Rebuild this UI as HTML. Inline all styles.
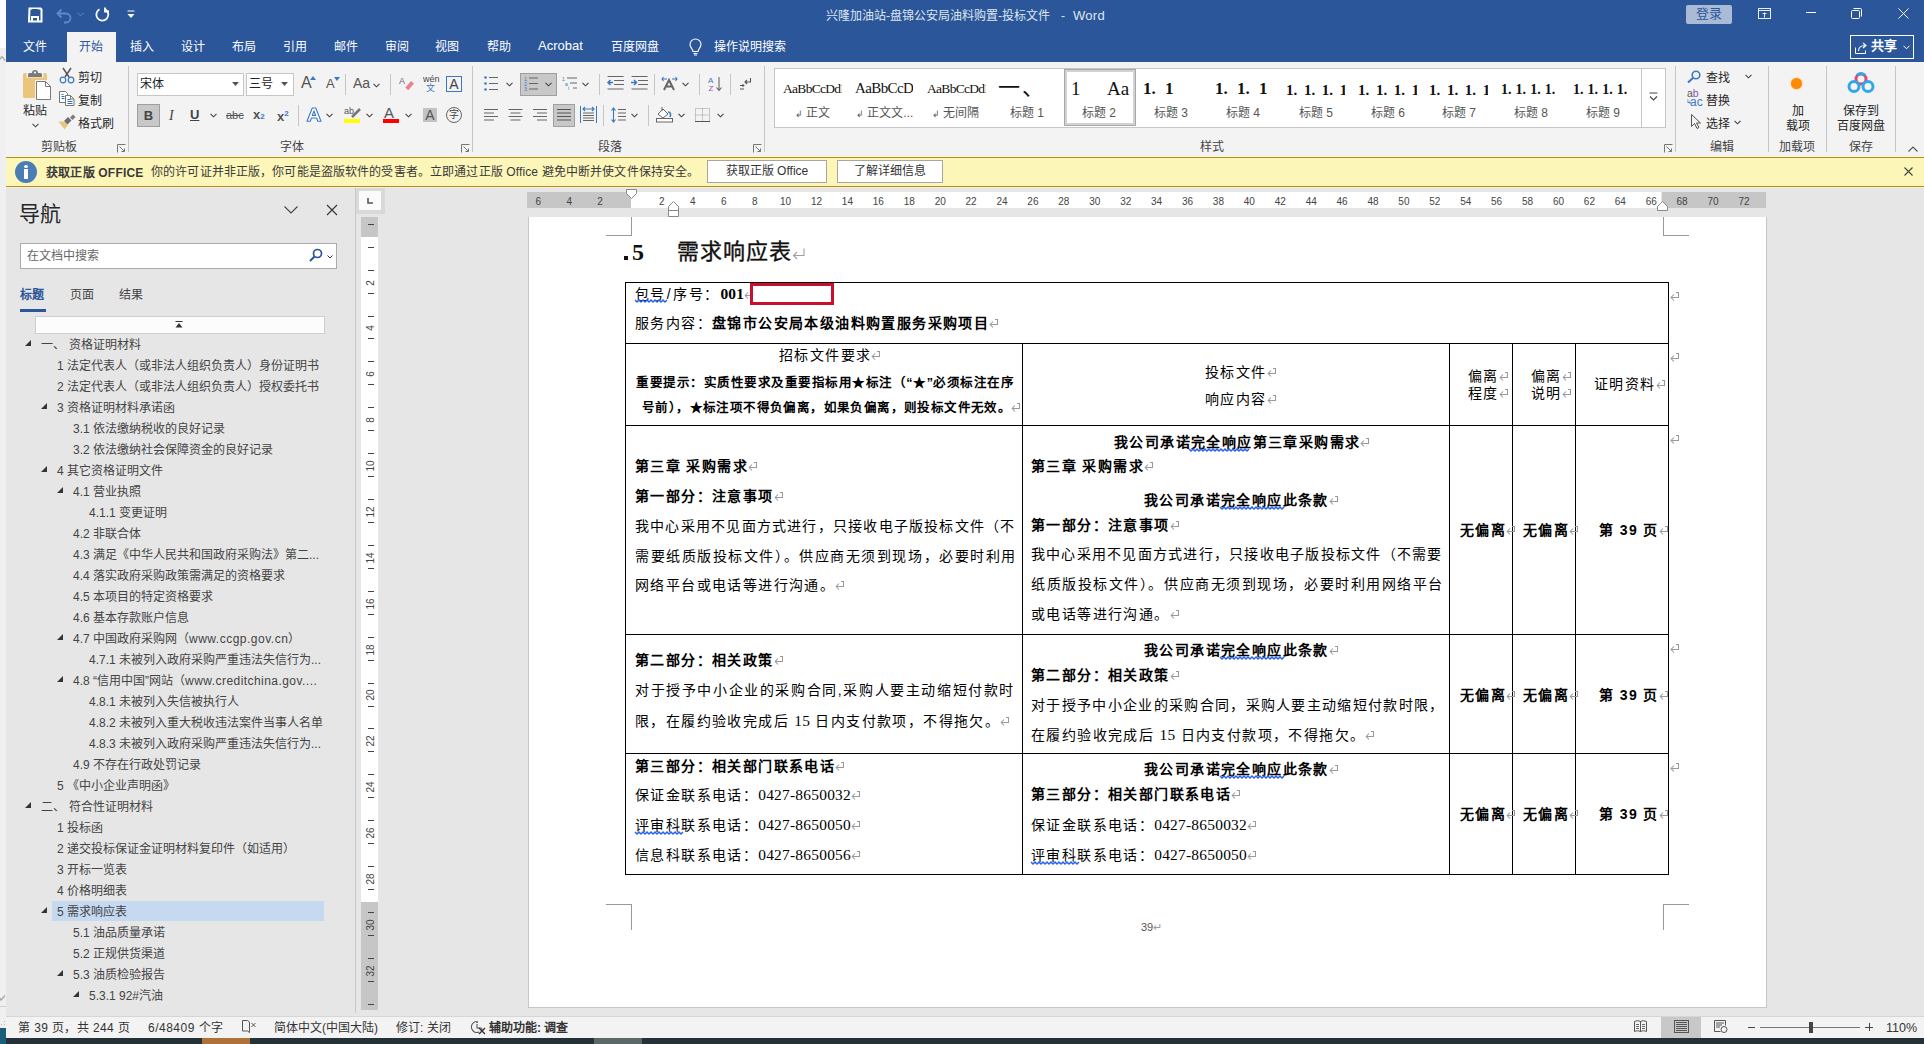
<!DOCTYPE html>
<html lang="zh-CN"><head><meta charset="utf-8">
<style>
*{box-sizing:border-box;margin:0;padding:0}
html,body{width:1924px;height:1044px;overflow:hidden;background:linear-gradient(#fff 0,#fff 48px,#f0f0f0 48px);font-family:"Liberation Sans",sans-serif;}
.a{position:absolute;white-space:nowrap}
#title{left:6px;top:0;width:1918px;height:62px;background:#2b579a}
#ribbon{left:6px;top:62px;width:1918px;height:126px;background:#f3f3f3}
#msg{left:6px;top:157px;width:1918px;height:30px;background:#fdf6b6;border-top:1px solid #b8900a;border-bottom:1px solid #b8900a;background:#fcf6b9}
#nav{left:6px;top:188px;width:350px;height:828px;background:#e6e6e6}
#docbg{left:356px;top:188px;width:1568px;height:828px;background:#e6e6e6}
#status{left:6px;top:1016px;width:1918px;height:22px;background:#f3f3f3;border-top:1px solid #d6d6d6}
#task{left:0;top:1038px;width:1924px;height:6px;background:#243238}
.tab{top:32px;height:30px;line-height:30px;font-size:12px;color:#fff}
.t12{font-size:12px;line-height:16px}
svg{position:absolute;overflow:visible}
</style></head><body>
<div class="a" id="title"></div>
<div class="a" id="ribbon"></div>
<div class="a" id="msg"></div>
<div class="a" id="nav"></div>
<div class="a" id="docbg"></div>
<div class="a" id="status"></div>
<div class="a" id="task"></div>

<!-- ===== TITLE BAR ===== -->
<!-- QAT -->
<svg style="left:28px;top:7px" width="15" height="16" viewBox="0 0 15 16"><path d="M1.5 1.5h11l1 1v12h-12.5z" fill="none" stroke="#fff" stroke-width="2"/><rect x="4" y="2" width="6" height="4" fill="#2b579a"/><path d="M4 15v-5h6v5" fill="none" stroke="#fff" stroke-width="2"/></svg>
<svg style="left:56px;top:8px" width="16" height="14" viewBox="0 0 16 14"><path d="M2 5.5h8a4.5 4.5 0 0 1 0 9H8" fill="none" stroke="#5e8cc4" stroke-width="1.8"/><path d="M5.5 1.5L1.5 5.5L5.5 9.5" fill="none" stroke="#5e8cc4" stroke-width="1.8"/></svg>
<svg style="left:77px;top:12px" width="7" height="5" viewBox="0 0 7 5"><path d="M0.5 0.8L3.5 3.8L6.5 0.8" fill="none" stroke="#5e8cc4" stroke-width="1"/></svg>
<svg style="left:95px;top:7px" width="15" height="15" viewBox="0 0 15 15"><path d="M10.5 2.5A6 6 0 1 1 4.5 2.3" fill="none" stroke="#fff" stroke-width="1.8"/><path d="M10 0.5v4h4" fill="none" stroke="#fff" stroke-width="1.8"/></svg>
<svg style="left:127px;top:10px" width="8" height="10" viewBox="0 0 8 10"><path d="M0.5 1h7" stroke="#fff" stroke-width="1"/><path d="M0.5 4h7L4 8z" fill="#fff"/></svg>
<div class="a t12" style="left:826px;top:8px;color:#dfe6f0">兴隆加油站-盘锦公安局油料购置-投标文件</div><div class="a t12" style="left:1061px;top:8px;color:#dfe6f0">-</div><div class="a t12" style="left:1073px;top:8px;color:#dfe6f0;font-size:13px;letter-spacing:0.3px">Word</div>
<div class="a" style="left:1686px;top:5px;width:46px;height:19px;background:#aabbd6;border-radius:2px;color:#2b579a;font-size:13px;line-height:18px;text-align:center">登录</div>
<svg style="left:1758px;top:8px" width="14" height="11" viewBox="0 0 14 11"><rect x="0.5" y="0.5" width="12" height="10" fill="none" stroke="#e8eef6" stroke-width="1"/><path d="M0.5 2.5h12" stroke="#e8eef6"/><path d="M6.5 9.5V4.5M4.5 5.5h4" fill="none" stroke="#e8eef6"/></svg>
<div class="a" style="left:1806px;top:12px;width:10px;height:1px;background:#fff"></div>
<svg style="left:1851px;top:8px" width="11" height="11" viewBox="0 0 11 11"><rect x="0.5" y="2.5" width="8" height="8" rx="1" fill="none" stroke="#fff"/><path d="M2.5 0.5h7a1 1 0 0 1 1 1v7" fill="none" stroke="#fff"/></svg>
<svg style="left:1898px;top:8px" width="11" height="11" viewBox="0 0 11 11"><path d="M0.5 0.5l10 10M10.5 0.5l-10 10" stroke="#fff" stroke-width="1"/></svg>

<!-- TABS -->
<div class="a" style="left:67px;top:32px;width:49px;height:30px;background:#f3f3f3"></div>
<div class="a tab" style="left:23px">文件</div>
<div class="a tab" style="left:79px;color:#2b579a">开始</div>
<div class="a tab" style="left:130px">插入</div>
<div class="a tab" style="left:181px">设计</div>
<div class="a tab" style="left:232px">布局</div>
<div class="a tab" style="left:283px">引用</div>
<div class="a tab" style="left:334px">邮件</div>
<div class="a tab" style="left:385px">审阅</div>
<div class="a tab" style="left:435px">视图</div>
<div class="a tab" style="left:487px">帮助</div>
<div class="a tab" style="left:538px;top:31px;font-size:13px">Acrobat</div>
<div class="a tab" style="left:611px">百度网盘</div>
<svg style="left:689px;top:39px" width="13" height="17" viewBox="0 0 13 17"><path d="M4 12.5C4 10 1 8.5 1 5.5a5.5 5.5 0 0 1 11 0c0 3-3 4.5-3 7z" fill="none" stroke="#fff" stroke-width="1.1"/><path d="M4.5 14.5h4M5 16h3" stroke="#fff" stroke-width="1"/></svg>
<div class="a tab" style="left:714px">操作说明搜索</div>
<div class="a" style="left:1850px;top:35px;width:64px;height:24px;border:1px solid #fff"></div>
<svg style="left:1855px;top:41px" width="14" height="13" viewBox="0 0 14 13"><path d="M0.5 6.5v6h10v-3" fill="none" stroke="#fff" stroke-width="1"/><path d="M3.5 10c0-3.5 2.5-5.5 6.5-5.5M8 2l3 2.5L8 7" fill="none" stroke="#fff" stroke-width="1.1"/></svg>
<div class="a" style="left:1871px;top:36px;font-size:13px;line-height:20px;color:#fff;font-weight:bold">共享</div>
<svg style="left:1903px;top:45px" width="7" height="5" viewBox="0 0 7 5"><path d="M0.5 0.8L3.5 3.8L6.5 0.8" fill="none" stroke="#fff" stroke-width="1"/></svg>

<!-- ===== RIBBON ===== -->
<style>
.rl{font-size:12px;line-height:14px;color:#262626}
.gl{font-size:12px;line-height:14px;color:#444;top:140px}
.sep{width:1px;background:#c6c6c6}
.gsep{top:66px;height:86px;width:1px;background:#c6c6c6}
.chev{width:7px;height:5px}
</style>
<!-- clipboard -->
<svg style="left:22px;top:68px" width="30" height="33" viewBox="0 0 30 33"><rect x="1" y="5" width="24" height="25" rx="1.5" fill="#ebc57c"/><rect x="4.5" y="2.5" width="17" height="7" fill="#f3f3f3"/><path d="M6 9V6.5a1.5 1.5 0 0 1 1.5-1.5H10a3 3 0 0 1 6 0h2.5A1.5 1.5 0 0 1 20 6.5V9z" fill="#7a7a7a"/><circle cx="13" cy="4.6" r="1.1" fill="#f3f3f3"/><rect x="13" y="12" width="17" height="21" fill="#f3f3f3"/><path d="M14.5 13.5h9l5 5v13h-14z" fill="#fff" stroke="#7a7a7a" stroke-width="1"/><path d="M23.5 13.5v5h5" fill="none" stroke="#7a7a7a"/></svg>
<div class="a rl" style="left:23px;top:104px">粘贴</div>
<svg class="chev" style="left:32px;top:123px" viewBox="0 0 7 5" width="7" height="5"><path d="M0.5 0.8L3.5 3.8L6.5 0.8" fill="none" stroke="#444" stroke-width="1.1"/></svg>
<svg style="left:59px;top:67px" width="16" height="17" viewBox="0 0 16 17"><path d="M4 1l6 9M12 1l-6 9" stroke="#555" stroke-width="1.5"/><circle cx="4" cy="13" r="2.8" fill="none" stroke="#3b78c4" stroke-width="1.2"/><circle cx="12" cy="13" r="2.8" fill="none" stroke="#3b78c4" stroke-width="1.2"/></svg>
<div class="a rl" style="left:78px;top:71px">剪切</div>
<svg style="left:59px;top:91px" width="16" height="15" viewBox="0 0 16 15"><path d="M0.5 0.5h6l2 2v9h-8z" fill="#fff" stroke="#777"/><path d="M6.5 4.5h5l3.5 3.5v6.5h-8.5z" fill="#fff" stroke="#777"/><path d="M11.5 4.5v3.5h3.5" fill="none" stroke="#777"/><path d="M2.5 3.5h2M2.5 5.5h3M2.5 7.5h3M8.5 8.5h3M8.5 10.5h5M8.5 12.5h5" stroke="#2f6fc4" stroke-width="1"/></svg>
<div class="a rl" style="left:78px;top:94px">复制</div>
<svg style="left:58px;top:114px" width="18" height="16" viewBox="0 0 18 16"><path d="M0.5 7.5h5.5l4 3.5-3.5 4.5z" fill="#ebc57c"/><path d="M6 7l4-4 3.5 3.5-4 4z" fill="#6e6e6e"/><path d="M12 3.5l3-3 2.5 2.5-3 3z" fill="#7a7a7a"/></svg>
<div class="a rl" style="left:78px;top:117px">格式刷</div>
<div class="a gl" style="left:41px">剪贴板</div>
<svg style="left:117px;top:144px" width="9" height="9" viewBox="0 0 9 9"><path d="M0.5 8.5v-8h8" fill="none" stroke="#777"/><path d="M2.5 2.5l5 5M4.5 7.5h3v-3" fill="none" stroke="#777"/></svg>
<div class="a gsep" style="left:128px"></div>

<!-- font group -->
<div class="a" style="left:137px;top:73px;width:107px;height:23px;background:#fff;border:1px solid #c6c6c6"></div>
<div class="a rl" style="left:140px;top:77px;color:#222">宋体</div>
<svg style="left:232px;top:82px" width="7" height="4" viewBox="0 0 7 4"><path d="M0 0h7L3.5 4z" fill="#555"/></svg>
<div class="a" style="left:246px;top:73px;width:48px;height:23px;background:#fff;border:1px solid #c6c6c6"></div>
<div class="a rl" style="left:249px;top:77px;color:#222">三号</div>
<svg style="left:281px;top:82px" width="7" height="4" viewBox="0 0 7 4"><path d="M0 0h7L3.5 4z" fill="#555"/></svg>
<div class="a" style="left:301px;top:74px;font-size:16px;line-height:17px;color:#555">A</div>
<svg style="left:310px;top:76px" width="6" height="4" viewBox="0 0 6 4"><path d="M0 4h6L3 0z" fill="#3b78c4"/></svg>
<div class="a" style="left:326px;top:77px;font-size:13px;line-height:14px;color:#555">A</div>
<svg style="left:334px;top:77px" width="6" height="4" viewBox="0 0 6 4"><path d="M0 0h6L3 4z" fill="#3b78c4"/></svg>
<div class="a sep" style="left:345px;top:74px;height:21px"></div>
<div class="a" style="left:353px;top:76px;font-size:14px;line-height:15px;color:#555">Aa</div>
<svg class="chev" style="left:373px;top:83px" viewBox="0 0 7 5" width="7" height="5"><path d="M0.5 0.8L3.5 3.8L6.5 0.8" fill="none" stroke="#444" stroke-width="1.1"/></svg>
<div class="a sep" style="left:390px;top:74px;height:21px"></div>
<svg style="left:399px;top:76px" width="16" height="16" viewBox="0 0 16 16"><text x="0" y="8" font-size="9" fill="#666" font-family="Liberation Sans">A</text><path d="M6 12l6-7 3 2.5-6 7z" fill="#e8828f"/><path d="M6 12l3 2.5" stroke="#fff" stroke-width="0.8"/></svg>
<div class="a" style="left:423px;top:75px;font-size:9px;line-height:9px;color:#444">wén</div>
<div class="a" style="left:426px;top:83px;font-size:9px;line-height:10px;color:#3b78c4">文</div>
<div class="a" style="left:446px;top:76px;width:16px;height:16px;border:1px solid #3b78c4;font-size:14px;line-height:14px;text-align:center;color:#444">A</div>
<!-- row 2 -->
<div class="a" style="left:137px;top:104px;width:23px;height:23px;background:#c8c8c8;border:1px solid #9f9f9f;font-size:13px;line-height:21px;text-align:center;font-weight:bold;color:#444">B</div>
<div class="a" style="left:169px;top:108px;font-size:14px;line-height:15px;font-style:italic;color:#444;font-family:'Liberation Serif',serif">I</div>
<div class="a" style="left:190px;top:108px;font-size:13px;line-height:14px;color:#444;font-weight:bold;text-decoration:underline">U</div>
<svg class="chev" style="left:210px;top:113px" viewBox="0 0 7 5" width="7" height="5"><path d="M0.5 0.8L3.5 3.8L6.5 0.8" fill="none" stroke="#444" stroke-width="1.1"/></svg>
<div class="a" style="left:226px;top:109px;font-size:11px;line-height:12px;color:#555;text-decoration:line-through">abc</div>
<div class="a" style="left:253px;top:108px;font-size:13px;line-height:14px;color:#555;font-weight:bold">x<span style="font-size:8px;color:#3b78c4">2</span></div>
<div class="a" style="left:277px;top:107px;font-size:13px;line-height:14px;color:#555;font-weight:bold">x<span style="font-size:8px;color:#3b78c4;vertical-align:5px">2</span></div>
<div class="a sep" style="left:298px;top:105px;height:21px"></div>
<svg style="left:306px;top:107px" width="16" height="15" viewBox="0 0 16 15"><path d="M1 14.2L6.3 1h3.4L15 14.2h-3.2l-1.2-3.2H5.4l-1.2 3.2zM6.3 8.4h3.4L8 3.9z" fill="#fff" stroke="#3b78c4" stroke-width="1.1" stroke-linejoin="round"/></svg>
<svg class="chev" style="left:326px;top:113px" viewBox="0 0 7 5" width="7" height="5"><path d="M0.5 0.8L3.5 3.8L6.5 0.8" fill="none" stroke="#444" stroke-width="1.1"/></svg>
<div class="a" style="left:344px;top:107px;font-size:9px;line-height:9px;color:#555">ab</div>
<svg style="left:350px;top:108px" width="11" height="11" viewBox="0 0 11 11"><path d="M2 9l8-8" stroke="#777" stroke-width="2.5"/></svg>
<div class="a" style="left:344px;top:119px;width:16px;height:4px;background:#ffff00"></div>
<svg class="chev" style="left:366px;top:113px" viewBox="0 0 7 5" width="7" height="5"><path d="M0.5 0.8L3.5 3.8L6.5 0.8" fill="none" stroke="#444" stroke-width="1.1"/></svg>
<div class="a" style="left:384px;top:106px;font-size:15px;line-height:14px;color:#555">A</div>
<div class="a" style="left:383px;top:119px;width:16px;height:4px;background:#ff0000"></div>
<svg class="chev" style="left:405px;top:113px" viewBox="0 0 7 5" width="7" height="5"><path d="M0.5 0.8L3.5 3.8L6.5 0.8" fill="none" stroke="#444" stroke-width="1.1"/></svg>
<div class="a" style="left:423px;top:108px;width:14px;height:14px;background:#c2c2c2;font-size:14px;line-height:14px;text-align:center;color:#555">A</div>
<div class="a" style="left:446px;top:107px;width:16px;height:16px;border:1px solid #666;border-radius:50%;font-size:10px;line-height:14px;text-align:center;color:#444">字</div>
<div class="a gl" style="left:280px">字体</div>
<svg style="left:461px;top:144px" width="9" height="9" viewBox="0 0 9 9"><path d="M0.5 8.5v-8h8" fill="none" stroke="#777"/><path d="M2.5 2.5l5 5M4.5 7.5h3v-3" fill="none" stroke="#777"/></svg>
<div class="a gsep" style="left:472px"></div>

<!-- paragraph group -->
<svg style="left:484px;top:76px" width="15" height="15" viewBox="0 0 15 15"><circle cx="1.5" cy="1.5" r="1.3" fill="#3b78c4"/><circle cx="1.5" cy="7.5" r="1.3" fill="#3b78c4"/><circle cx="1.5" cy="13.5" r="1.3" fill="#3b78c4"/><path d="M5 1.5h9M5 7.5h9M5 13.5h9" stroke="#666" stroke-width="1"/></svg>
<svg class="chev" style="left:506px;top:82px" viewBox="0 0 7 5" width="7" height="5"><path d="M0.5 0.8L3.5 3.8L6.5 0.8" fill="none" stroke="#444" stroke-width="1.1"/></svg>
<div class="a" style="left:520px;top:73px;width:37px;height:23px;background:#c8c8c8;border:1px solid #9f9f9f"></div>
<svg style="left:524px;top:76px" width="15" height="15" viewBox="0 0 15 15"><text x="0" y="5" font-size="5.5" fill="#3b78c4" font-family="Liberation Sans">1</text><text x="0" y="10" font-size="5.5" fill="#3b78c4" font-family="Liberation Sans">2</text><text x="0" y="15" font-size="5.5" fill="#3b78c4" font-family="Liberation Sans">3</text><path d="M5 2h9M5 7.5h9M5 13h9" stroke="#666" stroke-width="1"/></svg>
<svg class="chev" style="left:545px;top:82px" viewBox="0 0 7 5" width="7" height="5"><path d="M0.5 0.8L3.5 3.8L6.5 0.8" fill="none" stroke="#444" stroke-width="1.1"/></svg>
<svg style="left:562px;top:76px" width="16" height="15" viewBox="0 0 16 15"><text x="0" y="5" font-size="5" fill="#3b78c4" font-family="Liberation Sans">1</text><text x="3" y="9.5" font-size="5" fill="#3b78c4" font-family="Liberation Sans">a</text><text x="6" y="14" font-size="5" fill="#3b78c4" font-family="Liberation Sans">i</text><path d="M5 2h10M8 7h7M11 12h4" stroke="#666" stroke-width="1"/></svg>
<svg class="chev" style="left:582px;top:82px" viewBox="0 0 7 5" width="7" height="5"><path d="M0.5 0.8L3.5 3.8L6.5 0.8" fill="none" stroke="#444" stroke-width="1.1"/></svg>
<div class="a sep" style="left:599px;top:74px;height:21px"></div>
<svg style="left:607px;top:76px" width="17" height="14" viewBox="0 0 17 14"><path d="M0.5 0.5h16M7 4.5h10M7 8.5h10M0.5 13h16" stroke="#666"/><path d="M6 6.5H1M3.5 4L1 6.5 3.5 9" fill="none" stroke="#3b78c4" stroke-width="1.5"/></svg>
<svg style="left:631px;top:76px" width="17" height="14" viewBox="0 0 17 14"><path d="M0.5 0.5h16M7 4.5h10M7 8.5h10M0.5 13h16" stroke="#666"/><path d="M0 6.5h5M3 4l2.5 2.5L3 9" fill="none" stroke="#3b78c4" stroke-width="1.5"/></svg>
<div class="a sep" style="left:654px;top:74px;height:21px"></div>
<svg style="left:661px;top:76px" width="17" height="15" viewBox="0 0 17 15"><path d="M3 14l5-10 5 10M5 10.5h6" fill="none" stroke="#666" stroke-width="2"/><path d="M1 3h5M2.5 1L1 3l1.5 2M11 3h5M14.5 1L16 3l-1.5 2" fill="none" stroke="#3b78c4" stroke-width="1.1"/></svg>
<svg class="chev" style="left:682px;top:82px" viewBox="0 0 7 5" width="7" height="5"><path d="M0.5 0.8L3.5 3.8L6.5 0.8" fill="none" stroke="#444" stroke-width="1.1"/></svg>
<div class="a sep" style="left:699px;top:74px;height:21px"></div>
<svg style="left:708px;top:76px" width="15" height="16" viewBox="0 0 15 16"><text x="0" y="7" font-size="8" fill="#3b78c4" font-family="Liberation Sans">A</text><text x="0.5" y="15" font-size="8" fill="#8e4fb8" font-family="Liberation Sans">Z</text><path d="M11 1v13M8.5 11.5L11 14.5l2.5-3" fill="none" stroke="#666" stroke-width="1.1"/></svg>
<div class="a sep" style="left:730px;top:74px;height:21px"></div>
<svg style="left:740px;top:78px" width="12" height="12" viewBox="0 0 12 12"><path d="M10.5 0v4H5M7 2L5 4l2 2" fill="none" stroke="#555" stroke-width="1.1"/><path d="M0 7.5h4M2.5 6l1.5 1.5L2.5 9M0 11h4" fill="none" stroke="#555" stroke-width="1"/></svg>
<!-- row 2 -->
<svg style="left:484px;top:109px" width="15" height="12" viewBox="0 0 15 12"><path d="M0 0.5h14M0 4h10M0 7.5h14M0 11h10" stroke="#666"/></svg>
<svg style="left:508px;top:109px" width="15" height="12" viewBox="0 0 15 12"><path d="M0.5 0.5h14M2.5 4h10M0.5 7.5h14M2.5 11h10" stroke="#666"/></svg>
<svg style="left:532px;top:109px" width="15" height="12" viewBox="0 0 15 12"><path d="M1 0.5h14M5 4h10M1 7.5h14M5 11h10" stroke="#666"/></svg>
<div class="a" style="left:553px;top:104px;width:22px;height:23px;background:#c8c8c8;border:1px solid #9f9f9f"></div>
<svg style="left:557px;top:109px" width="15" height="12" viewBox="0 0 15 12"><path d="M0 0.5h14M0 4h14M0 7.5h14M0 11h14" stroke="#555"/></svg>
<svg style="left:580px;top:106px" width="17" height="17" viewBox="0 0 17 17"><path d="M0.5 0v17M16.5 0v17" stroke="#3b78c4"/><path d="M3 3h11M5 1l-2 2 2 2M12 1l2 2-2 2" fill="none" stroke="#3b78c4" stroke-width="1.1"/><path d="M3 7h11M3 9.5h11M3 12h11M3 14.5h11" stroke="#666"/></svg>
<div class="a sep" style="left:603px;top:105px;height:21px"></div>
<svg style="left:611px;top:107px" width="16" height="16" viewBox="0 0 16 16"><path d="M2.5 1v14M0.5 3.5L2.5 1l2 2.5M0.5 12.5l2 2.5 2-2.5" fill="none" stroke="#3b78c4" stroke-width="1.1"/><path d="M7 2.5h8M7 6h8M7 9.5h8M7 13h8" stroke="#666"/></svg>
<svg class="chev" style="left:631px;top:113px" viewBox="0 0 7 5" width="7" height="5"><path d="M0.5 0.8L3.5 3.8L6.5 0.8" fill="none" stroke="#444" stroke-width="1.1"/></svg>
<div class="a sep" style="left:648px;top:105px;height:21px"></div>
<svg style="left:656px;top:106px" width="17" height="17" viewBox="0 0 17 17"><path d="M2 8l5-5 5 5-5 4z" fill="#fff" stroke="#666"/><path d="M6 1v4" stroke="#666"/><path d="M12 6c3 0 3 3 2 5" fill="none" stroke="#3b78c4" stroke-width="1.5"/><rect x="0.5" y="12.5" width="16" height="3.5" fill="#fff" stroke="#666"/></svg>
<svg class="chev" style="left:678px;top:113px" viewBox="0 0 7 5" width="7" height="5"><path d="M0.5 0.8L3.5 3.8L6.5 0.8" fill="none" stroke="#444" stroke-width="1.1"/></svg>
<svg style="left:695px;top:108px" width="15" height="14" viewBox="0 0 15 14"><path d="M0.5 0.5h14v13h-14zM7.5 0.5v13M0.5 7h14" fill="none" stroke="#999" stroke-width="1" stroke-dasharray="1 1"/><path d="M0 13.5h15" stroke="#555"/></svg>
<svg class="chev" style="left:717px;top:113px" viewBox="0 0 7 5" width="7" height="5"><path d="M0.5 0.8L3.5 3.8L6.5 0.8" fill="none" stroke="#444" stroke-width="1.1"/></svg>
<div class="a gl" style="left:598px">段落</div>
<svg style="left:753px;top:144px" width="9" height="9" viewBox="0 0 9 9"><path d="M0.5 8.5v-8h8" fill="none" stroke="#777"/><path d="M2.5 2.5l5 5M4.5 7.5h3v-3" fill="none" stroke="#777"/></svg>
<div class="a gsep" style="left:764px"></div>

<!-- styles gallery -->
<div class="a" style="left:774px;top:68px;width:868px;height:60px;background:#fff;border:1px solid #c6c6c6;border-right:none"></div>
<div class="a" style="left:1641px;top:68px;width:25px;height:60px;background:#fff;border:1px solid #c6c6c6"></div>
<svg style="left:1649px;top:92px" width="9" height="10" viewBox="0 0 9 10"><path d="M0.5 1h8" stroke="#444"/><path d="M1 4.5l3.5 3.5 3.5-3.5" fill="none" stroke="#444" stroke-width="1.1"/></svg>
<div class="a" style="left:1064px;top:69px;width:72px;height:57px;border:1px solid #a8a8a8;box-shadow:inset 0 0 0 2px #d2d2d2;background:#fff"></div>
<style>
.sp{top:82px;font-family:"Liberation Serif",serif;font-size:13.5px;line-height:14px;color:#111;overflow:hidden}
.sb{top:80px;font-family:"Liberation Serif",serif;font-size:17px;line-height:18px;color:#111;font-weight:bold;overflow:hidden;letter-spacing:0.5px}
.sl{top:106px;font-size:12px;line-height:14px;color:#555}
</style>
<div class="a sp" style="left:783px;width:59px;letter-spacing:-0.7px">AaBbCcDdI</div>
<div class="a sp" style="left:855px;top:81px;width:58px;letter-spacing:-0.6px;font-size:15px">AaBbCcDd</div>
<div class="a sp" style="left:927px;width:59px;letter-spacing:-0.7px">AaBbCcDdI</div>
<div class="a sl" style="left:795px"><span style="font-size:9px">↲</span> 正文</div>
<div class="a sl" style="left:856px"><span style="font-size:9px">↲</span> 正文文...</div>
<div class="a sl" style="left:932px"><span style="font-size:9px">↲</span> 无间隔</div>
<div class="a" style="left:998px;top:77px;font-size:22px;line-height:22px;color:#111;letter-spacing:1.5px">一、</div>
<div class="a sl" style="left:1010px">标题 1</div>
<div class="a" style="left:1071px;top:80px;font-family:'Liberation Serif',serif;font-size:19px;line-height:18px;color:#111">1</div><div class="a" style="left:1107px;top:80px;font-family:'Liberation Serif',serif;font-size:19px;line-height:18px;color:#111">Aa</div>
<div class="a sl" style="left:1082px">标题 2</div>
<div class="a sb" style="left:1143px;width:58px;font-size:17px;letter-spacing:0;word-spacing:5px">1. 1 &nbsp; &nbsp;A</div>
<div class="a sl" style="left:1154px">标题 3</div>
<div class="a sb" style="left:1215px;width:56px;font-size:17px;letter-spacing:0;word-spacing:5px">1. 1. 1</div>
<div class="a sl" style="left:1226px">标题 4</div>
<div class="a sb" style="left:1286px;width:59px;font-size:15px;letter-spacing:0;word-spacing:2.9px;top:81px">1. 1. 1. 1</div>
<div class="a sl" style="left:1299px">标题 5</div>
<div class="a sb" style="left:1358px;width:59px;font-size:15px;letter-spacing:0;word-spacing:2.9px;top:81px">1. 1. 1. 1</div>
<div class="a sl" style="left:1371px">标题 6</div>
<div class="a sb" style="left:1429px;width:59px;font-size:15px;letter-spacing:0;word-spacing:2.9px;top:81px">1. 1. 1. 1</div>
<div class="a sl" style="left:1442px">标题 7</div>
<div class="a sb" style="left:1501px;width:62px;font-size:14px;letter-spacing:0;word-spacing:0.6px;top:81px">1. 1. 1. 1.</div>
<div class="a sl" style="left:1514px">标题 8</div>
<div class="a sb" style="left:1573px;width:62px;font-size:14px;letter-spacing:0;word-spacing:0.6px;top:81px">1. 1. 1. 1.</div>
<div class="a sl" style="left:1586px">标题 9</div>
<div class="a gl" style="left:1200px">样式</div>
<svg style="left:1664px;top:144px" width="9" height="9" viewBox="0 0 9 9"><path d="M0.5 8.5v-8h8" fill="none" stroke="#777"/><path d="M2.5 2.5l5 5M4.5 7.5h3v-3" fill="none" stroke="#777"/></svg>
<div class="a gsep" style="left:1675px"></div>
<!-- editing -->
<svg style="left:1687px;top:70px" width="14" height="13" viewBox="0 0 14 13"><circle cx="9" cy="5" r="3.8" fill="none" stroke="#3b78c4" stroke-width="1.6"/><path d="M6.2 7.8L1 12.5" stroke="#3b78c4" stroke-width="2"/></svg>
<div class="a rl" style="left:1706px;top:71px">查找</div>
<svg class="chev" style="left:1745px;top:74px" viewBox="0 0 7 5" width="7" height="5"><path d="M0.5 0.8L3.5 3.8L6.5 0.8" fill="none" stroke="#444" stroke-width="1.1"/></svg>
<div class="a" style="left:1687px;top:89px;font-size:10.5px;line-height:9px;color:#555">a<span style="color:#8e4fb8">b</span></div>
<div class="a" style="left:1690px;top:97px;font-size:12px;line-height:10px;color:#3b78c4">ac</div>
<div class="a" style="left:1686px;top:98px;font-size:7px;line-height:7px;color:#3b78c4">↳</div>
<div class="a rl" style="left:1706px;top:94px">替换</div>
<svg style="left:1691px;top:114px" width="10" height="15" viewBox="0 0 10 15"><path d="M0.5 0.5v12l3-3 2.5 5 2-1-2.5-4.5h4z" fill="none" stroke="#555" stroke-width="1"/></svg>
<div class="a rl" style="left:1706px;top:117px">选择</div>
<svg class="chev" style="left:1734px;top:120px" viewBox="0 0 7 5" width="7" height="5"><path d="M0.5 0.8L3.5 3.8L6.5 0.8" fill="none" stroke="#444" stroke-width="1.1"/></svg>
<div class="a gl" style="left:1710px">编辑</div>
<div class="a gsep" style="left:1768px"></div>
<!-- add-ins -->
<div class="a" style="left:1791px;top:78px;width:11px;height:11px;border-radius:50%;background:#ff8c00;box-shadow:0 0 2px #ffb060"></div>
<div class="a rl" style="left:1792px;top:104px">加</div>
<div class="a rl" style="left:1786px;top:119px">载项</div>
<div class="a gl" style="left:1779px">加载项</div>
<div class="a gsep" style="left:1826px"></div>
<!-- save baidu -->
<svg style="left:1847px;top:72px" width="28" height="22" viewBox="0 0 28 22"><circle cx="14" cy="7" r="5" fill="none" stroke="#e8466a" stroke-width="3"/><circle cx="7" cy="14.5" r="5" fill="none" stroke="#2fa8e8" stroke-width="3"/><circle cx="21" cy="14.5" r="5" fill="none" stroke="#2fa8e8" stroke-width="3"/><path d="M10 3.5a5 5 0 0 1 8 0" fill="none" stroke="#2fa8e8" stroke-width="3"/></svg>
<div class="a rl" style="left:1843px;top:104px">保存到</div>
<div class="a rl" style="left:1837px;top:119px">百度网盘</div>
<div class="a gl" style="left:1849px">保存</div>
<div class="a gsep" style="left:1895px"></div>
<svg style="left:1908px;top:146px" width="10" height="6" viewBox="0 0 10 6"><path d="M0.5 5.5L5 1l4.5 4.5" fill="none" stroke="#555" stroke-width="1.1"/></svg>

<!-- ===== MESSAGE BAR ===== -->
<div class="a" style="left:15px;top:161px;width:22px;height:22px;border-radius:50%;background:#4a7db5"></div>
<div class="a" style="left:24px;top:165px;width:4px;height:3px;border-radius:50%;background:#fff"></div>
<div class="a" style="left:24px;top:169px;width:4px;height:10px;background:#fff"></div>
<div class="a" style="left:46px;top:165px;font-size:12px;line-height:16px;color:#3a3a3a;font-weight:bold;letter-spacing:0.2px">获取正版 OFFICE</div>
<div class="a" style="left:151px;top:164px;font-size:12px;line-height:16px;color:#3a3a3a;letter-spacing:0.13px">你的许可证并非正版，你可能是盗版软件的受害者。立即通过正版 Office 避免中断并使文件保持安全。</div>
<div class="a" style="left:707px;top:160px;width:120px;height:23px;background:#fff;border:1px solid #a6a6a6;font-size:12px;line-height:21px;text-align:center;color:#333">获取正版 Office</div>
<div class="a" style="left:837px;top:160px;width:106px;height:23px;background:#fff;border:1px solid #a6a6a6;font-size:12px;line-height:21px;text-align:center;color:#333">了解详细信息</div>
<svg style="left:1904px;top:167px" width="9" height="9" viewBox="0 0 9 9"><path d="M0.5 0.5l8 8M8.5 0.5l-8 8" stroke="#444" stroke-width="1.1"/></svg>

<!-- ===== NAV PANE ===== -->
<style>.ni{font-size:12px;line-height:16px;color:#444}</style>
<div class="a" style="left:19px;top:200px;font-size:21px;line-height:28px;color:#262626">导航</div>
<svg style="left:284px;top:206px" width="14" height="8" viewBox="0 0 14 8"><path d="M0.5 0.5L7 7l6.5-6.5" fill="none" stroke="#444" stroke-width="1.1"/></svg>
<svg style="left:327px;top:205px" width="10" height="10" viewBox="0 0 10 10"><path d="M0 0l10 10M10 0L0 10" stroke="#333" stroke-width="1.1"/></svg>
<div class="a" style="left:20px;top:243px;width:317px;height:26px;background:#fff;border:1px solid #ababab"></div>
<div class="a" style="left:27px;top:248px;font-size:12px;line-height:16px;color:#666">在文档中搜索</div>
<svg style="left:309px;top:248px" width="14" height="14" viewBox="0 0 14 14"><circle cx="8.5" cy="5.5" r="4" fill="none" stroke="#2b579a" stroke-width="1.7"/><path d="M5.5 8.5L1 13" stroke="#2b579a" stroke-width="2"/></svg>
<svg style="left:327px;top:255px" width="6" height="4" viewBox="0 0 6 4"><path d="M0.5 0.5l2.5 2.5 2.5-2.5" fill="none" stroke="#333" stroke-width="1"/></svg>
<div class="a" style="left:20px;top:287px;font-size:12px;line-height:16px;color:#2b579a;font-weight:bold">标题</div>
<div class="a" style="left:20px;top:309px;width:26px;height:3px;background:#2b579a"></div>
<div class="a" style="left:70px;top:287px;font-size:12px;line-height:16px;color:#444">页面</div>
<div class="a" style="left:119px;top:287px;font-size:12px;line-height:16px;color:#444">结果</div>
<div class="a" style="left:35px;top:316px;width:290px;height:18px;background:#fcfcfc;border:1px solid #cfcfcf"></div>
<svg style="left:175px;top:321px" width="8" height="7" viewBox="0 0 8 7"><path d="M0.5 0.5h7" stroke="#333"/><path d="M0.5 6.5L4 2l3.5 4.5z" fill="#333"/></svg>
<div class="a" style="left:52px;top:901px;width:272px;height:20px;background:#c5d9f1"></div>
<svg style="left:25px;top:340px" width="6" height="6" viewBox="0 0 6 6"><path d="M6 0V6H0z" fill="#333"/></svg>
<div class="a ni" style="left:41px;top:337px">一、</div><div class="a ni" style="left:69px;top:337px">资格证明材料</div>
<div class="a ni" style="left:57px;top:358px">1 法定代表人（或非法人组织负责人）身份证明书</div>
<div class="a ni" style="left:57px;top:379px">2 法定代表人（或非法人组织负责人）授权委托书</div>
<svg style="left:41px;top:403px" width="6" height="6" viewBox="0 0 6 6"><path d="M6 0V6H0z" fill="#333"/></svg>
<div class="a ni" style="left:57px;top:400px">3 资格证明材料承诺函</div>
<div class="a ni" style="left:73px;top:421px">3.1 依法缴纳税收的良好记录</div>
<div class="a ni" style="left:73px;top:442px">3.2 依法缴纳社会保障资金的良好记录</div>
<svg style="left:41px;top:466px" width="6" height="6" viewBox="0 0 6 6"><path d="M6 0V6H0z" fill="#333"/></svg>
<div class="a ni" style="left:57px;top:463px">4 其它资格证明文件</div>
<svg style="left:57px;top:487px" width="6" height="6" viewBox="0 0 6 6"><path d="M6 0V6H0z" fill="#333"/></svg>
<div class="a ni" style="left:73px;top:484px">4.1 营业执照</div>
<div class="a ni" style="left:89px;top:505px">4.1.1 变更证明</div>
<div class="a ni" style="left:73px;top:526px">4.2 非联合体</div>
<div class="a ni" style="left:73px;top:547px">4.3 满足《中华人民共和国政府采购法》第二...</div>
<div class="a ni" style="left:73px;top:568px">4.4 落实政府采购政策需满足的资格要求</div>
<div class="a ni" style="left:73px;top:589px">4.5 本项目的特定资格要求</div>
<div class="a ni" style="left:73px;top:610px">4.6 基本存款账户信息</div>
<svg style="left:57px;top:634px" width="6" height="6" viewBox="0 0 6 6"><path d="M6 0V6H0z" fill="#333"/></svg>
<div class="a ni" style="left:73px;top:631px">4.7 中国政府采购网（<span style="letter-spacing:0.5px">www.ccgp.gov.cn</span>）</div>
<div class="a ni" style="left:89px;top:652px">4.7.1 未被列入政府采购严重违法失信行为...</div>
<svg style="left:57px;top:676px" width="6" height="6" viewBox="0 0 6 6"><path d="M6 0V6H0z" fill="#333"/></svg>
<div class="a ni" style="left:73px;top:673px">4.8 “信用中国”网站（<span style="letter-spacing:0.45px">www.creditchina.gov....</span></div>
<div class="a ni" style="left:89px;top:694px">4.8.1 未被列入失信被执行人</div>
<div class="a ni" style="left:89px;top:715px">4.8.2 未被列入重大税收违法案件当事人名单</div>
<div class="a ni" style="left:89px;top:736px">4.8.3 未被列入政府采购严重违法失信行为...</div>
<div class="a ni" style="left:73px;top:757px">4.9 不存在行政处罚记录</div>
<div class="a ni" style="left:57px;top:778px">5 《中小企业声明函》</div>
<svg style="left:25px;top:802px" width="6" height="6" viewBox="0 0 6 6"><path d="M6 0V6H0z" fill="#333"/></svg>
<div class="a ni" style="left:41px;top:799px">二、</div><div class="a ni" style="left:69px;top:799px">符合性证明材料</div>
<div class="a ni" style="left:57px;top:820px">1 投标函</div>
<div class="a ni" style="left:57px;top:841px">2 递交投标保证金证明材料复印件（如适用）</div>
<div class="a ni" style="left:57px;top:862px">3 开标一览表</div>
<div class="a ni" style="left:57px;top:883px">4 价格明细表</div>
<svg style="left:41px;top:907px" width="6" height="6" viewBox="0 0 6 6"><path d="M6 0V6H0z" fill="#333"/></svg>
<div class="a ni" style="left:57px;top:904px">5 需求响应表</div>
<div class="a ni" style="left:73px;top:925px">5.1 油品质量承诺</div>
<div class="a ni" style="left:73px;top:946px">5.2 正规供货渠道</div>
<svg style="left:57px;top:970px" width="6" height="6" viewBox="0 0 6 6"><path d="M6 0V6H0z" fill="#333"/></svg>
<div class="a ni" style="left:73px;top:967px">5.3 油质检验报告</div>
<svg style="left:73px;top:991px" width="6" height="6" viewBox="0 0 6 6"><path d="M6 0V6H0z" fill="#333"/></svg>
<div class="a ni" style="left:89px;top:988px">5.3.1 92#汽油</div>
<!-- ===== RULERS ===== -->
<div class="a" style="left:6px;top:187px;width:1918px;height:1px;background:#ededf2"></div>
<div class="a" style="left:355px;top:188px;width:1px;height:825px;background:#c8c8c8"></div>
<div class="a" style="left:356px;top:188px;width:29px;height:26px;background:#d9d9d9"></div>
<div class="a" style="left:359px;top:191px;width:22px;height:19px;background:#fbfbfb"></div>
<svg style="left:367px;top:198px" width="6" height="6" viewBox="0 0 6 6"><path d="M1 0v5h5" fill="none" stroke="#555" stroke-width="1.6"/></svg>
<div class="a" style="left:527px;top:192px;width:104px;height:16px;background:#c6c6c6"></div>
<div class="a" style="left:631px;top:192px;width:1030px;height:16px;background:#fff"></div>
<div class="a" style="left:1662px;top:192px;width:104px;height:16px;background:#c6c6c6"></div>
<div class="a" style="left:523.3px;top:196px;width:30px;text-align:center;font-size:10px;line-height:12px;color:#444">6</div>
<div class="a" style="left:554.2px;top:196px;width:30px;text-align:center;font-size:10px;line-height:12px;color:#444">4</div>
<div class="a" style="left:585.1px;top:196px;width:30px;text-align:center;font-size:10px;line-height:12px;color:#444">2</div>
<div class="a" style="left:646.9px;top:196px;width:30px;text-align:center;font-size:10px;line-height:12px;color:#444">2</div>
<div class="a" style="left:677.8px;top:196px;width:30px;text-align:center;font-size:10px;line-height:12px;color:#444">4</div>
<div class="a" style="left:708.7px;top:196px;width:30px;text-align:center;font-size:10px;line-height:12px;color:#444">6</div>
<div class="a" style="left:739.7px;top:196px;width:30px;text-align:center;font-size:10px;line-height:12px;color:#444">8</div>
<div class="a" style="left:770.6px;top:196px;width:30px;text-align:center;font-size:10px;line-height:12px;color:#444">10</div>
<div class="a" style="left:801.5px;top:196px;width:30px;text-align:center;font-size:10px;line-height:12px;color:#444">12</div>
<div class="a" style="left:832.4px;top:196px;width:30px;text-align:center;font-size:10px;line-height:12px;color:#444">14</div>
<div class="a" style="left:863.3px;top:196px;width:30px;text-align:center;font-size:10px;line-height:12px;color:#444">16</div>
<div class="a" style="left:894.2px;top:196px;width:30px;text-align:center;font-size:10px;line-height:12px;color:#444">18</div>
<div class="a" style="left:925.2px;top:196px;width:30px;text-align:center;font-size:10px;line-height:12px;color:#444">20</div>
<div class="a" style="left:956.1px;top:196px;width:30px;text-align:center;font-size:10px;line-height:12px;color:#444">22</div>
<div class="a" style="left:987.0px;top:196px;width:30px;text-align:center;font-size:10px;line-height:12px;color:#444">24</div>
<div class="a" style="left:1017.9px;top:196px;width:30px;text-align:center;font-size:10px;line-height:12px;color:#444">26</div>
<div class="a" style="left:1048.8px;top:196px;width:30px;text-align:center;font-size:10px;line-height:12px;color:#444">28</div>
<div class="a" style="left:1079.7px;top:196px;width:30px;text-align:center;font-size:10px;line-height:12px;color:#444">30</div>
<div class="a" style="left:1110.7px;top:196px;width:30px;text-align:center;font-size:10px;line-height:12px;color:#444">32</div>
<div class="a" style="left:1141.6px;top:196px;width:30px;text-align:center;font-size:10px;line-height:12px;color:#444">34</div>
<div class="a" style="left:1172.5px;top:196px;width:30px;text-align:center;font-size:10px;line-height:12px;color:#444">36</div>
<div class="a" style="left:1203.4px;top:196px;width:30px;text-align:center;font-size:10px;line-height:12px;color:#444">38</div>
<div class="a" style="left:1234.3px;top:196px;width:30px;text-align:center;font-size:10px;line-height:12px;color:#444">40</div>
<div class="a" style="left:1265.2px;top:196px;width:30px;text-align:center;font-size:10px;line-height:12px;color:#444">42</div>
<div class="a" style="left:1296.2px;top:196px;width:30px;text-align:center;font-size:10px;line-height:12px;color:#444">44</div>
<div class="a" style="left:1327.1px;top:196px;width:30px;text-align:center;font-size:10px;line-height:12px;color:#444">46</div>
<div class="a" style="left:1358.0px;top:196px;width:30px;text-align:center;font-size:10px;line-height:12px;color:#444">48</div>
<div class="a" style="left:1388.9px;top:196px;width:30px;text-align:center;font-size:10px;line-height:12px;color:#444">50</div>
<div class="a" style="left:1419.8px;top:196px;width:30px;text-align:center;font-size:10px;line-height:12px;color:#444">52</div>
<div class="a" style="left:1450.7px;top:196px;width:30px;text-align:center;font-size:10px;line-height:12px;color:#444">54</div>
<div class="a" style="left:1481.6px;top:196px;width:30px;text-align:center;font-size:10px;line-height:12px;color:#444">56</div>
<div class="a" style="left:1512.6px;top:196px;width:30px;text-align:center;font-size:10px;line-height:12px;color:#444">58</div>
<div class="a" style="left:1543.5px;top:196px;width:30px;text-align:center;font-size:10px;line-height:12px;color:#444">60</div>
<div class="a" style="left:1574.4px;top:196px;width:30px;text-align:center;font-size:10px;line-height:12px;color:#444">62</div>
<div class="a" style="left:1605.3px;top:196px;width:30px;text-align:center;font-size:10px;line-height:12px;color:#444">64</div>
<div class="a" style="left:1636.2px;top:196px;width:30px;text-align:center;font-size:10px;line-height:12px;color:#444">66</div>
<div class="a" style="left:1667.1px;top:196px;width:30px;text-align:center;font-size:10px;line-height:12px;color:#444">68</div>
<div class="a" style="left:1698.1px;top:196px;width:30px;text-align:center;font-size:10px;line-height:12px;color:#444">70</div>
<div class="a" style="left:1729.0px;top:196px;width:30px;text-align:center;font-size:10px;line-height:12px;color:#444">72</div>
<svg style="left:626px;top:189px" width="11" height="10" viewBox="0 0 11 10"><path d="M0.5 0.5h10v4l-5 5-5-5z" fill="#fff" stroke="#888"/></svg>
<svg style="left:668px;top:201px" width="11" height="16" viewBox="0 0 11 16"><path d="M0.5 15.5v-10l5-5 5 5v10z" fill="#fff" stroke="#888"/><path d="M0.5 9.5h10" stroke="#888"/></svg>
<svg style="left:1657px;top:201px" width="11" height="10" viewBox="0 0 11 10"><path d="M0.5 9.5v-4l5-5 5 5v4z" fill="#fff" stroke="#888"/></svg>
<div class="a" style="left:361px;top:217px;width:17px;height:20px;background:#c6c6c6"></div>
<div class="a" style="left:361px;top:237px;width:17px;height:666px;background:#fff"></div>
<div class="a" style="left:361px;top:902px;width:17px;height:108px;background:#c6c6c6"></div>
<div class="a" style="left:368px;top:224px;width:6px;height:1px;background:#444"></div>
<div class="a" style="left:368px;top:247px;width:6px;height:1px;background:#444"></div>
<div class="a" style="left:368px;top:270px;width:6px;height:1px;background:#444"></div>
<div class="a" style="left:368px;top:293px;width:6px;height:1px;background:#444"></div>
<div class="a" style="left:368px;top:316px;width:6px;height:1px;background:#444"></div>
<div class="a" style="left:368px;top:338px;width:6px;height:1px;background:#444"></div>
<div class="a" style="left:368px;top:361px;width:6px;height:1px;background:#444"></div>
<div class="a" style="left:368px;top:384px;width:6px;height:1px;background:#444"></div>
<div class="a" style="left:368px;top:407px;width:6px;height:1px;background:#444"></div>
<div class="a" style="left:368px;top:430px;width:6px;height:1px;background:#444"></div>
<div class="a" style="left:368px;top:453px;width:6px;height:1px;background:#444"></div>
<div class="a" style="left:368px;top:476px;width:6px;height:1px;background:#444"></div>
<div class="a" style="left:368px;top:499px;width:6px;height:1px;background:#444"></div>
<div class="a" style="left:368px;top:522px;width:6px;height:1px;background:#444"></div>
<div class="a" style="left:368px;top:545px;width:6px;height:1px;background:#444"></div>
<div class="a" style="left:368px;top:568px;width:6px;height:1px;background:#444"></div>
<div class="a" style="left:368px;top:591px;width:6px;height:1px;background:#444"></div>
<div class="a" style="left:368px;top:614px;width:6px;height:1px;background:#444"></div>
<div class="a" style="left:368px;top:637px;width:6px;height:1px;background:#444"></div>
<div class="a" style="left:368px;top:660px;width:6px;height:1px;background:#444"></div>
<div class="a" style="left:368px;top:683px;width:6px;height:1px;background:#444"></div>
<div class="a" style="left:368px;top:706px;width:6px;height:1px;background:#444"></div>
<div class="a" style="left:368px;top:728px;width:6px;height:1px;background:#444"></div>
<div class="a" style="left:368px;top:751px;width:6px;height:1px;background:#444"></div>
<div class="a" style="left:368px;top:774px;width:6px;height:1px;background:#444"></div>
<div class="a" style="left:368px;top:797px;width:6px;height:1px;background:#444"></div>
<div class="a" style="left:368px;top:820px;width:6px;height:1px;background:#444"></div>
<div class="a" style="left:368px;top:843px;width:6px;height:1px;background:#444"></div>
<div class="a" style="left:368px;top:866px;width:6px;height:1px;background:#444"></div>
<div class="a" style="left:368px;top:889px;width:6px;height:1px;background:#444"></div>
<div class="a" style="left:368px;top:912px;width:6px;height:1px;background:#444"></div>
<div class="a" style="left:368px;top:935px;width:6px;height:1px;background:#444"></div>
<div class="a" style="left:368px;top:958px;width:6px;height:1px;background:#444"></div>
<div class="a" style="left:368px;top:981px;width:6px;height:1px;background:#444"></div>
<div class="a" style="left:368px;top:1004px;width:6px;height:1px;background:#444"></div>
<div class="a" style="left:356px;top:276.5px;width:30px;height:12px;text-align:center;font-size:10px;line-height:12px;color:#444;transform:rotate(-90deg)">2</div>
<div class="a" style="left:356px;top:322.4px;width:30px;height:12px;text-align:center;font-size:10px;line-height:12px;color:#444;transform:rotate(-90deg)">4</div>
<div class="a" style="left:356px;top:368.3px;width:30px;height:12px;text-align:center;font-size:10px;line-height:12px;color:#444;transform:rotate(-90deg)">6</div>
<div class="a" style="left:356px;top:414.1px;width:30px;height:12px;text-align:center;font-size:10px;line-height:12px;color:#444;transform:rotate(-90deg)">8</div>
<div class="a" style="left:356px;top:460.0px;width:30px;height:12px;text-align:center;font-size:10px;line-height:12px;color:#444;transform:rotate(-90deg)">10</div>
<div class="a" style="left:356px;top:505.9px;width:30px;height:12px;text-align:center;font-size:10px;line-height:12px;color:#444;transform:rotate(-90deg)">12</div>
<div class="a" style="left:356px;top:551.8px;width:30px;height:12px;text-align:center;font-size:10px;line-height:12px;color:#444;transform:rotate(-90deg)">14</div>
<div class="a" style="left:356px;top:597.7px;width:30px;height:12px;text-align:center;font-size:10px;line-height:12px;color:#444;transform:rotate(-90deg)">16</div>
<div class="a" style="left:356px;top:643.5px;width:30px;height:12px;text-align:center;font-size:10px;line-height:12px;color:#444;transform:rotate(-90deg)">18</div>
<div class="a" style="left:356px;top:689.4px;width:30px;height:12px;text-align:center;font-size:10px;line-height:12px;color:#444;transform:rotate(-90deg)">20</div>
<div class="a" style="left:356px;top:735.3px;width:30px;height:12px;text-align:center;font-size:10px;line-height:12px;color:#444;transform:rotate(-90deg)">22</div>
<div class="a" style="left:356px;top:781.2px;width:30px;height:12px;text-align:center;font-size:10px;line-height:12px;color:#444;transform:rotate(-90deg)">24</div>
<div class="a" style="left:356px;top:827.1px;width:30px;height:12px;text-align:center;font-size:10px;line-height:12px;color:#444;transform:rotate(-90deg)">26</div>
<div class="a" style="left:356px;top:872.9px;width:30px;height:12px;text-align:center;font-size:10px;line-height:12px;color:#444;transform:rotate(-90deg)">28</div>
<div class="a" style="left:356px;top:918.8px;width:30px;height:12px;text-align:center;font-size:10px;line-height:12px;color:#444;transform:rotate(-90deg)">30</div>
<div class="a" style="left:356px;top:964.7px;width:30px;height:12px;text-align:center;font-size:10px;line-height:12px;color:#444;transform:rotate(-90deg)">32</div>
<!-- ===== PAGE ===== -->
<div class="a" style="left:528px;top:217px;width:1239px;height:791px;background:#fff;border:1px solid #c6c6c6;border-top:none"></div>
<div class="a" style="left:606px;top:235px;width:26px;height:1px;background:#999"></div>
<div class="a" style="left:631px;top:217px;width:1px;height:19px;background:#999"></div>
<div class="a" style="left:1663px;top:235px;width:26px;height:1px;background:#999"></div>
<div class="a" style="left:1663px;top:217px;width:1px;height:19px;background:#999"></div>
<div class="a" style="left:606px;top:904px;width:26px;height:1px;background:#999"></div>
<div class="a" style="left:631px;top:904px;width:1px;height:26px;background:#999"></div>
<div class="a" style="left:1663px;top:904px;width:26px;height:1px;background:#999"></div>
<div class="a" style="left:1663px;top:904px;width:1px;height:26px;background:#999"></div>
<div class="a" style="left:1141px;top:920px;font-size:11px;line-height:14px;color:#555">39<span style="color:#999">↵</span></div>
<!-- ===== DOC CONTENT ===== -->
<style>.d{font-size:14px;line-height:20px;color:#000;letter-spacing:1.4px}.db{font-weight:bold}.rm{display:inline-block;width:10px;height:9px;vertical-align:0px;margin-left:0px}.mn{font-family:"Liberation Serif",serif;font-size:15.4px;letter-spacing:0.25px}</style>
<div class="a" style="left:625px;top:282px;width:1044px;height:1px;background:#000"></div>
<div class="a" style="left:625px;top:343px;width:1044px;height:1px;background:#000"></div>
<div class="a" style="left:625px;top:425px;width:1044px;height:1px;background:#000"></div>
<div class="a" style="left:625px;top:634px;width:1044px;height:1px;background:#000"></div>
<div class="a" style="left:625px;top:753px;width:1044px;height:1px;background:#000"></div>
<div class="a" style="left:625px;top:874px;width:1044px;height:1px;background:#000"></div>
<div class="a" style="left:625px;top:282px;width:1px;height:593px;background:#000"></div>
<div class="a" style="left:1668px;top:282px;width:1px;height:593px;background:#000"></div>
<div class="a" style="left:1022px;top:343px;width:1px;height:531px;background:#000"></div>
<div class="a" style="left:1449px;top:343px;width:1px;height:531px;background:#000"></div>
<div class="a" style="left:1512px;top:343px;width:1px;height:531px;background:#000"></div>
<div class="a" style="left:1575px;top:343px;width:1px;height:531px;background:#000"></div>
<div class="a" style="left:624px;top:256px;width:4px;height:4px;background:#111"></div><div class="a" style="left:632px;top:237px;font-size:24px;line-height:30px;font-weight:bold;font-family:'Liberation Serif',serif;color:#111">5</div>
<div class="a" style="left:677px;top:237px;font-size:22px;line-height:30px;letter-spacing:1.1px;font-weight:normal;-webkit-text-stroke:0.35px #111;color:#111">需求响应表<svg style="position:static;vertical-align:-1px;margin-left:-1px" width="14" height="12" viewBox="0 0 14 12"><path d="M12 0.5v7H2M5 4L1.5 7.5 5 11" fill="none" stroke="#a0a0a0" stroke-width="1.1"/></svg></div>
<div class="a d" style="left:635px;top:283.5px;">包号<span style="letter-spacing:2.5px;margin-left:1px">/</span>序号：<b class="mn" style="font-family:'Liberation Serif',serif;font-size:15.4px;margin-left:1px">001</b><svg class="rm" style="position:static" viewBox="0 0 10 9" width="10" height="9"><path d="M6 0.5H8.5v5H1.5M4 2.5L1.2 5.5 4 8.5" fill="none" stroke="#999" stroke-width="1.05"/></svg></div>
<svg style="left:0;top:0" width="1924" height="1044"><path d="M635 300 l2 2 l2 -2 l2 2 l2 -2 l2 2 l2 -2 l2 2 l2 -2 l2 2 l2 -2 l2 2 l2 -2 l2 2 l2 -2 l2 2 l2 -2" fill="none" stroke="#2a64e6" stroke-width="1.5"/></svg>
<div class="a" style="left:750px;top:283px;width:84px;height:22px;border:3px solid #c8102e"></div>
<div class="a d" style="left:635px;top:313.3px;">服务内容：<b>盘锦市公安局本级油料购置服务采购项目</b><svg class="rm" style="position:static" viewBox="0 0 10 9" width="10" height="9"><path d="M6 0.5H8.5v5H1.5M4 2.5L1.2 5.5 4 8.5" fill="none" stroke="#999" stroke-width="1.05"/></svg></div>
<svg style="left:1670px;top:292px" width="10" height="10" viewBox="0 0 10 10"><path d="M6 0.5H8.5v5H1M4 2.5L1 5.5 4 8.5" fill="none" stroke="#999" stroke-width="1.05"/></svg>
<svg style="left:1670px;top:353px" width="10" height="10" viewBox="0 0 10 10"><path d="M6 0.5H8.5v5H1M4 2.5L1 5.5 4 8.5" fill="none" stroke="#999" stroke-width="1.05"/></svg>
<svg style="left:1670px;top:435px" width="10" height="10" viewBox="0 0 10 10"><path d="M6 0.5H8.5v5H1M4 2.5L1 5.5 4 8.5" fill="none" stroke="#999" stroke-width="1.05"/></svg>
<svg style="left:1670px;top:644px" width="10" height="10" viewBox="0 0 10 10"><path d="M6 0.5H8.5v5H1M4 2.5L1 5.5 4 8.5" fill="none" stroke="#999" stroke-width="1.05"/></svg>
<svg style="left:1670px;top:763px" width="10" height="10" viewBox="0 0 10 10"><path d="M6 0.5H8.5v5H1M4 2.5L1 5.5 4 8.5" fill="none" stroke="#999" stroke-width="1.05"/></svg>
<div class="a d" style="left:779px;top:344.5px;">招标文件要求<svg class="rm" style="position:static" viewBox="0 0 10 9" width="10" height="9"><path d="M6 0.5H8.5v5H1.5M4 2.5L1.2 5.5 4 8.5" fill="none" stroke="#999" stroke-width="1.05"/></svg></div>
<div class="a d db" style="left:636px;top:374px;width:378px;font-size:12.5px;letter-spacing:0;text-align:justify;text-align-last:justify;line-height:18px">重要提示：实质性要求及重要指标用★标注（“★”必须标注在序</div>
<div class="a d db" style="left:642px;top:399px;font-size:12.5px;letter-spacing:0.4px;line-height:18px">号前），★标注项不得负偏离，如果负偏离，则投标文件无效。<svg class="rm" style="position:static" viewBox="0 0 10 9" width="10" height="9"><path d="M6 0.5H8.5v5H1.5M4 2.5L1.2 5.5 4 8.5" fill="none" stroke="#999" stroke-width="1.05"/></svg></div>
<div class="a d" style="left:1205px;top:361.7px;">投标文件<svg class="rm" style="position:static" viewBox="0 0 10 9" width="10" height="9"><path d="M6 0.5H8.5v5H1.5M4 2.5L1.2 5.5 4 8.5" fill="none" stroke="#999" stroke-width="1.05"/></svg></div>
<div class="a d" style="left:1205px;top:389.3px;">响应内容<svg class="rm" style="position:static" viewBox="0 0 10 9" width="10" height="9"><path d="M6 0.5H8.5v5H1.5M4 2.5L1.2 5.5 4 8.5" fill="none" stroke="#999" stroke-width="1.05"/></svg></div>
<div class="a d" style="left:1468px;top:365.6px;">偏离<svg class="rm" style="position:static" viewBox="0 0 10 9" width="10" height="9"><path d="M6 0.5H8.5v5H1.5M4 2.5L1.2 5.5 4 8.5" fill="none" stroke="#999" stroke-width="1.05"/></svg></div>
<div class="a d" style="left:1468px;top:383.4px;">程度<svg class="rm" style="position:static" viewBox="0 0 10 9" width="10" height="9"><path d="M6 0.5H8.5v5H1.5M4 2.5L1.2 5.5 4 8.5" fill="none" stroke="#999" stroke-width="1.05"/></svg></div>
<div class="a d" style="left:1531px;top:365.6px;">偏离<svg class="rm" style="position:static" viewBox="0 0 10 9" width="10" height="9"><path d="M6 0.5H8.5v5H1.5M4 2.5L1.2 5.5 4 8.5" fill="none" stroke="#999" stroke-width="1.05"/></svg></div>
<div class="a d" style="left:1531px;top:383.4px;">说明<svg class="rm" style="position:static" viewBox="0 0 10 9" width="10" height="9"><path d="M6 0.5H8.5v5H1.5M4 2.5L1.2 5.5 4 8.5" fill="none" stroke="#999" stroke-width="1.05"/></svg></div>
<div class="a d" style="left:1594px;top:374.0px;">证明资料<svg class="rm" style="position:static" viewBox="0 0 10 9" width="10" height="9"><path d="M6 0.5H8.5v5H1.5M4 2.5L1.2 5.5 4 8.5" fill="none" stroke="#999" stroke-width="1.05"/></svg></div>
<div class="a d db" style="left:635px;top:455.7px;">第三章&nbsp;采购需求<svg class="rm" style="position:static" viewBox="0 0 10 9" width="10" height="9"><path d="M6 0.5H8.5v5H1.5M4 2.5L1.2 5.5 4 8.5" fill="none" stroke="#999" stroke-width="1.05"/></svg></div>
<div class="a d db" style="left:635px;top:485.9px;">第一部分：注意事项<svg class="rm" style="position:static" viewBox="0 0 10 9" width="10" height="9"><path d="M6 0.5H8.5v5H1.5M4 2.5L1.2 5.5 4 8.5" fill="none" stroke="#999" stroke-width="1.05"/></svg></div>
<div class="a d" style="left:635px;top:515.5px;width:380px;text-align:justify;text-align-last:justify;letter-spacing:0.6px;">我中心采用不见面方式进行，只接收电子版投标文件（不</div>
<div class="a d" style="left:635px;top:545.8px;width:381px;text-align:justify;text-align-last:justify;letter-spacing:0.6px;">需要纸质版投标文件）。供应商无须到现场，必要时利用</div>
<div class="a d" style="left:635px;top:575.2px;">网络平台或电话等进行沟通。<svg class="rm" style="position:static" viewBox="0 0 10 9" width="10" height="9"><path d="M6 0.5H8.5v5H1.5M4 2.5L1.2 5.5 4 8.5" fill="none" stroke="#999" stroke-width="1.05"/></svg></div>
<div class="a d db" style="left:1114px;top:432.0px;">我公司承诺完全响应第三章采购需求<svg class="rm" style="position:static" viewBox="0 0 10 9" width="10" height="9"><path d="M6 0.5H8.5v5H1.5M4 2.5L1.2 5.5 4 8.5" fill="none" stroke="#999" stroke-width="1.05"/></svg></div>
<svg style="left:0;top:0" width="1924" height="1044"><path d="M1189 449 l2 2 l2 -2 l2 2 l2 -2 l2 2 l2 -2 l2 2 l2 -2 l2 2 l2 -2 l2 2 l2 -2 l2 2 l2 -2 l2 2 l2 -2 l2 2 l2 -2 l2 2 l2 -2 l2 2 l2 -2 l2 2 l2 -2 l2 2 l2 -2 l2 2 l2 -2 l2 2 l2 -2" fill="none" stroke="#2a64e6" stroke-width="1.5"/></svg>
<div class="a d db" style="left:1031px;top:455.7px;">第三章&nbsp;采购需求<svg class="rm" style="position:static" viewBox="0 0 10 9" width="10" height="9"><path d="M6 0.5H8.5v5H1.5M4 2.5L1.2 5.5 4 8.5" fill="none" stroke="#999" stroke-width="1.05"/></svg></div>
<div class="a d db" style="left:1144px;top:490.0px;">我公司承诺完全响应此条款<svg class="rm" style="position:static" viewBox="0 0 10 9" width="10" height="9"><path d="M6 0.5H8.5v5H1.5M4 2.5L1.2 5.5 4 8.5" fill="none" stroke="#999" stroke-width="1.05"/></svg></div>
<svg style="left:0;top:0" width="1924" height="1044"><path d="M1220 507 l2 2 l2 -2 l2 2 l2 -2 l2 2 l2 -2 l2 2 l2 -2 l2 2 l2 -2 l2 2 l2 -2 l2 2 l2 -2 l2 2 l2 -2 l2 2 l2 -2 l2 2 l2 -2 l2 2 l2 -2 l2 2 l2 -2 l2 2 l2 -2 l2 2 l2 -2 l2 2 l2 -2 l2 2 l2 -2" fill="none" stroke="#2a64e6" stroke-width="1.5"/></svg>
<div class="a d db" style="left:1031px;top:514.7px;">第一部分：注意事项<svg class="rm" style="position:static" viewBox="0 0 10 9" width="10" height="9"><path d="M6 0.5H8.5v5H1.5M4 2.5L1.2 5.5 4 8.5" fill="none" stroke="#999" stroke-width="1.05"/></svg></div>
<div class="a d" style="left:1031px;top:544.3px;width:411px;text-align:justify;text-align-last:justify;letter-spacing:0.6px;">我中心采用不见面方式进行，只接收电子版投标文件（不需要</div>
<div class="a d" style="left:1031px;top:574.3px;width:412px;text-align:justify;text-align-last:justify;letter-spacing:0.6px;">纸质版投标文件）。供应商无须到现场，必要时利用网络平台</div>
<div class="a d" style="left:1031px;top:604.4px;">或电话等进行沟通。<svg class="rm" style="position:static" viewBox="0 0 10 9" width="10" height="9"><path d="M6 0.5H8.5v5H1.5M4 2.5L1.2 5.5 4 8.5" fill="none" stroke="#999" stroke-width="1.05"/></svg></div>
<div class="a d db" style="left:1460px;top:520.0px;">无偏离<svg class="rm" style="position:static" viewBox="0 0 10 9" width="10" height="9"><path d="M6 0.5H8.5v5H1.5M4 2.5L1.2 5.5 4 8.5" fill="none" stroke="#999" stroke-width="1.05"/></svg></div>
<div class="a d db" style="left:1523px;top:520.0px;">无偏离<svg class="rm" style="position:static" viewBox="0 0 10 9" width="10" height="9"><path d="M6 0.5H8.5v5H1.5M4 2.5L1.2 5.5 4 8.5" fill="none" stroke="#999" stroke-width="1.05"/></svg></div>
<div class="a d db" style="left:1599px;top:520.0px;">第&nbsp;39&nbsp;页<svg class="rm" style="position:static" viewBox="0 0 10 9" width="10" height="9"><path d="M6 0.5H8.5v5H1.5M4 2.5L1.2 5.5 4 8.5" fill="none" stroke="#999" stroke-width="1.05"/></svg></div>
<div class="a d db" style="left:635px;top:649.7px;">第二部分：相关政策<svg class="rm" style="position:static" viewBox="0 0 10 9" width="10" height="9"><path d="M6 0.5H8.5v5H1.5M4 2.5L1.2 5.5 4 8.5" fill="none" stroke="#999" stroke-width="1.05"/></svg></div>
<div class="a d" style="left:635px;top:679.8px;width:379px;text-align:justify;text-align-last:justify;letter-spacing:0.6px;">对于授予中小企业的采购合同,采购人要主动缩短付款时</div>
<div class="a d" style="left:635px;top:711.0px;">限，在履约验收完成后&nbsp;<span class="mn">15</span>&nbsp;日内支付款项，不得拖欠。<svg class="rm" style="position:static" viewBox="0 0 10 9" width="10" height="9"><path d="M6 0.5H8.5v5H1.5M4 2.5L1.2 5.5 4 8.5" fill="none" stroke="#999" stroke-width="1.05"/></svg></div>
<div class="a d db" style="left:1144px;top:640.3px;">我公司承诺完全响应此条款<svg class="rm" style="position:static" viewBox="0 0 10 9" width="10" height="9"><path d="M6 0.5H8.5v5H1.5M4 2.5L1.2 5.5 4 8.5" fill="none" stroke="#999" stroke-width="1.05"/></svg></div>
<svg style="left:0;top:0" width="1924" height="1044"><path d="M1220 657 l2 2 l2 -2 l2 2 l2 -2 l2 2 l2 -2 l2 2 l2 -2 l2 2 l2 -2 l2 2 l2 -2 l2 2 l2 -2 l2 2 l2 -2 l2 2 l2 -2 l2 2 l2 -2 l2 2 l2 -2 l2 2 l2 -2 l2 2 l2 -2 l2 2 l2 -2 l2 2 l2 -2 l2 2 l2 -2" fill="none" stroke="#2a64e6" stroke-width="1.5"/></svg>
<div class="a d db" style="left:1031px;top:665.3px;">第二部分：相关政策<svg class="rm" style="position:static" viewBox="0 0 10 9" width="10" height="9"><path d="M6 0.5H8.5v5H1.5M4 2.5L1.2 5.5 4 8.5" fill="none" stroke="#999" stroke-width="1.05"/></svg></div>
<div class="a d" style="left:1031px;top:695.4px;width:413px;text-align:justify;text-align-last:justify;letter-spacing:0.6px;">对于授予中小企业的采购合同，采购人要主动缩短付款时限，</div>
<div class="a d" style="left:1031px;top:725.4px;">在履约验收完成后&nbsp;<span class="mn">15</span>&nbsp;日内支付款项，不得拖欠。<svg class="rm" style="position:static" viewBox="0 0 10 9" width="10" height="9"><path d="M6 0.5H8.5v5H1.5M4 2.5L1.2 5.5 4 8.5" fill="none" stroke="#999" stroke-width="1.05"/></svg></div>
<div class="a d db" style="left:1460px;top:685.0px;">无偏离<svg class="rm" style="position:static" viewBox="0 0 10 9" width="10" height="9"><path d="M6 0.5H8.5v5H1.5M4 2.5L1.2 5.5 4 8.5" fill="none" stroke="#999" stroke-width="1.05"/></svg></div>
<div class="a d db" style="left:1523px;top:685.0px;">无偏离<svg class="rm" style="position:static" viewBox="0 0 10 9" width="10" height="9"><path d="M6 0.5H8.5v5H1.5M4 2.5L1.2 5.5 4 8.5" fill="none" stroke="#999" stroke-width="1.05"/></svg></div>
<div class="a d db" style="left:1599px;top:685.0px;">第&nbsp;39&nbsp;页<svg class="rm" style="position:static" viewBox="0 0 10 9" width="10" height="9"><path d="M6 0.5H8.5v5H1.5M4 2.5L1.2 5.5 4 8.5" fill="none" stroke="#999" stroke-width="1.05"/></svg></div>
<div class="a d db" style="left:635px;top:755.6px;">第三部分：相关部门联系电话<svg class="rm" style="position:static" viewBox="0 0 10 9" width="10" height="9"><path d="M6 0.5H8.5v5H1.5M4 2.5L1.2 5.5 4 8.5" fill="none" stroke="#999" stroke-width="1.05"/></svg></div>
<div class="a d" style="left:635px;top:785.0px;">保证金联系电话：<span class="mn">0427-8650032</span><svg class="rm" style="position:static" viewBox="0 0 10 9" width="10" height="9"><path d="M6 0.5H8.5v5H1.5M4 2.5L1.2 5.5 4 8.5" fill="none" stroke="#999" stroke-width="1.05"/></svg></div>
<div class="a d" style="left:635px;top:814.9px;">评审科联系电话：<span class="mn">0427-8650050</span><svg class="rm" style="position:static" viewBox="0 0 10 9" width="10" height="9"><path d="M6 0.5H8.5v5H1.5M4 2.5L1.2 5.5 4 8.5" fill="none" stroke="#999" stroke-width="1.05"/></svg></div>
<svg style="left:0;top:0" width="1924" height="1044"><path d="M635 832 l2 2 l2 -2 l2 2 l2 -2 l2 2 l2 -2 l2 2 l2 -2 l2 2 l2 -2 l2 2 l2 -2 l2 2 l2 -2 l2 2 l2 -2 l2 2 l2 -2 l2 2 l2 -2 l2 2 l2 -2 l2 2 l2 -2" fill="none" stroke="#2a64e6" stroke-width="1.5"/></svg>
<div class="a d" style="left:635px;top:844.8px;">信息科联系电话：<span class="mn">0427-8650056</span><svg class="rm" style="position:static" viewBox="0 0 10 9" width="10" height="9"><path d="M6 0.5H8.5v5H1.5M4 2.5L1.2 5.5 4 8.5" fill="none" stroke="#999" stroke-width="1.05"/></svg></div>
<div class="a d db" style="left:1144px;top:758.8px;">我公司承诺完全响应此条款<svg class="rm" style="position:static" viewBox="0 0 10 9" width="10" height="9"><path d="M6 0.5H8.5v5H1.5M4 2.5L1.2 5.5 4 8.5" fill="none" stroke="#999" stroke-width="1.05"/></svg></div>
<svg style="left:0;top:0" width="1924" height="1044"><path d="M1220 776 l2 2 l2 -2 l2 2 l2 -2 l2 2 l2 -2 l2 2 l2 -2 l2 2 l2 -2 l2 2 l2 -2 l2 2 l2 -2 l2 2 l2 -2 l2 2 l2 -2 l2 2 l2 -2 l2 2 l2 -2 l2 2 l2 -2 l2 2 l2 -2 l2 2 l2 -2 l2 2 l2 -2 l2 2 l2 -2" fill="none" stroke="#2a64e6" stroke-width="1.5"/></svg>
<div class="a d db" style="left:1031px;top:784.4px;">第三部分：相关部门联系电话<svg class="rm" style="position:static" viewBox="0 0 10 9" width="10" height="9"><path d="M6 0.5H8.5v5H1.5M4 2.5L1.2 5.5 4 8.5" fill="none" stroke="#999" stroke-width="1.05"/></svg></div>
<div class="a d" style="left:1031px;top:814.5px;">保证金联系电话：<span class="mn">0427-8650032</span><svg class="rm" style="position:static" viewBox="0 0 10 9" width="10" height="9"><path d="M6 0.5H8.5v5H1.5M4 2.5L1.2 5.5 4 8.5" fill="none" stroke="#999" stroke-width="1.05"/></svg></div>
<div class="a d" style="left:1031px;top:845.0px;">评审科联系电话：<span class="mn">0427-8650050</span><svg class="rm" style="position:static" viewBox="0 0 10 9" width="10" height="9"><path d="M6 0.5H8.5v5H1.5M4 2.5L1.2 5.5 4 8.5" fill="none" stroke="#999" stroke-width="1.05"/></svg></div>
<svg style="left:0;top:0" width="1924" height="1044"><path d="M1031 862 l2 2 l2 -2 l2 2 l2 -2 l2 2 l2 -2 l2 2 l2 -2 l2 2 l2 -2 l2 2 l2 -2 l2 2 l2 -2 l2 2 l2 -2 l2 2 l2 -2 l2 2 l2 -2 l2 2 l2 -2 l2 2 l2 -2" fill="none" stroke="#2a64e6" stroke-width="1.5"/></svg>
<div class="a d db" style="left:1460px;top:803.8px;">无偏离<svg class="rm" style="position:static" viewBox="0 0 10 9" width="10" height="9"><path d="M6 0.5H8.5v5H1.5M4 2.5L1.2 5.5 4 8.5" fill="none" stroke="#999" stroke-width="1.05"/></svg></div>
<div class="a d db" style="left:1523px;top:803.8px;">无偏离<svg class="rm" style="position:static" viewBox="0 0 10 9" width="10" height="9"><path d="M6 0.5H8.5v5H1.5M4 2.5L1.2 5.5 4 8.5" fill="none" stroke="#999" stroke-width="1.05"/></svg></div>
<div class="a d db" style="left:1599px;top:803.8px;">第&nbsp;39&nbsp;页<svg class="rm" style="position:static" viewBox="0 0 10 9" width="10" height="9"><path d="M6 0.5H8.5v5H1.5M4 2.5L1.2 5.5 4 8.5" fill="none" stroke="#999" stroke-width="1.05"/></svg></div>
<!-- ===== STATUS BAR ===== -->
<style>.st{top:1020px;font-size:12px;line-height:16px;color:#333}</style>
<div class="a st" style="left:18px;letter-spacing:0.4px">第 39 页，共 244 页</div>
<div class="a st" style="left:148px;letter-spacing:0.5px">6/48409 个字</div>
<svg style="left:242px;top:1020px" width="15" height="13" viewBox="0 0 15 13"><path d="M0.5 0.5h5l2 1.5v10.5l-2-1.5h-5z" fill="none" stroke="#555"/><path d="M7.5 2v10.5" stroke="#555"/><path d="M9.5 3l4 4M13.5 3l-4 4" stroke="#555"/></svg>
<div class="a st" style="left:274px">简体中文(中国大陆)</div>
<div class="a st" style="left:396px">修订: 关闭</div>
<svg style="left:470px;top:1020px" width="16" height="14" viewBox="0 0 16 14"><path d="M6 1.5A5.5 5.5 0 1 0 9 12" fill="none" stroke="#555" stroke-width="1.1"/><circle cx="7" cy="2" r="1" fill="#555"/><path d="M7 4v4h4l2 3" fill="none" stroke="#555" stroke-width="1.1"/><path d="M9 8l6 6M15 8l-6 6" stroke="#333" stroke-width="1.4"/></svg>
<div class="a st" style="left:489px;font-weight:bold;color:#333">辅助功能: 调查</div>
<svg style="left:1634px;top:1020px" width="13" height="12" viewBox="0 0 13 12"><path d="M0.5 1.5c2-1 4-1 6 0v10c-2-1-4-1-6 0zM6.5 1.5c2-1 4-1 6 0v10c-2-1-4-1-6 0z" fill="none" stroke="#555"/><path d="M2 4.5h3M2 6.5h3M2 8.5h3M8 4.5h3M8 6.5h3M8 8.5h3" stroke="#666"/></svg>
<div class="a" style="left:1661px;top:1017px;width:40px;height:21px;background:#c8c8c8"></div>
<svg style="left:1674px;top:1020px" width="15" height="13" viewBox="0 0 15 13"><rect x="0.5" y="0.5" width="14" height="12" fill="none" stroke="#555"/><path d="M2 2.5h11M2 4.5h11M2 6.5h11M2 8.5h11M2 10.5h11" stroke="#555"/></svg>
<svg style="left:1714px;top:1020px" width="14" height="13" viewBox="0 0 14 13"><path d="M0.5 0.5h11v5M0.5 0.5v11h6" fill="none" stroke="#555"/><path d="M2 3h8M2 5h6M2 7h4" stroke="#555"/><circle cx="10" cy="9.5" r="3" fill="none" stroke="#555"/></svg>
<div class="a" style="left:1748px;top:1027px;width:7px;height:1px;background:#444"></div>
<div class="a" style="left:1760px;top:1027px;width:100px;height:1px;background:#777"></div>
<div class="a" style="left:1809px;top:1022px;width:4px;height:11px;background:#444"></div>
<div class="a" style="left:1865px;top:1027px;width:8px;height:1px;background:#444"></div>
<div class="a" style="left:1869px;top:1023px;width:1px;height:8px;background:#444"></div>
<div class="a st" style="left:1886px;font-size:12.5px">110%</div>
<div class="a" style="left:0;top:1038px;width:6px;height:6px;background:#1a5f7a"></div>
<div class="a" style="left:202px;top:1038px;width:48px;height:6px;background:#b0703a"></div>
<div class="a" style="left:594px;top:1038px;width:48px;height:6px;background:#5a6868"></div>

<svg style="left:0px;top:55px" width="6" height="8" viewBox="0 0 6 8"><path d="M-1 5L2 1.5 5 5.5" fill="none" stroke="#aaa" stroke-width="1.4"/></svg>
<svg style="left:0px;top:994px" width="6" height="8" viewBox="0 0 6 8"><path d="M-1 3L1 6 5 1.5" fill="none" stroke="#aaa" stroke-width="1.4"/></svg>
<div class="a" style="left:0;top:1006px;width:6px;height:1px;background:#d0d0d0"></div>
<div class="a" style="left:4px;top:1021px;width:1px;height:1px;background:#bbb"></div>
<div class="a" style="left:1px;top:1024px;width:1px;height:1px;background:#bbb"></div>
<div class="a" style="left:4px;top:1024px;width:1px;height:1px;background:#bbb"></div>
<div class="a" style="left:0;top:1028px;width:6px;height:10px;background:#1a5f7a"></div>

</body></html>
